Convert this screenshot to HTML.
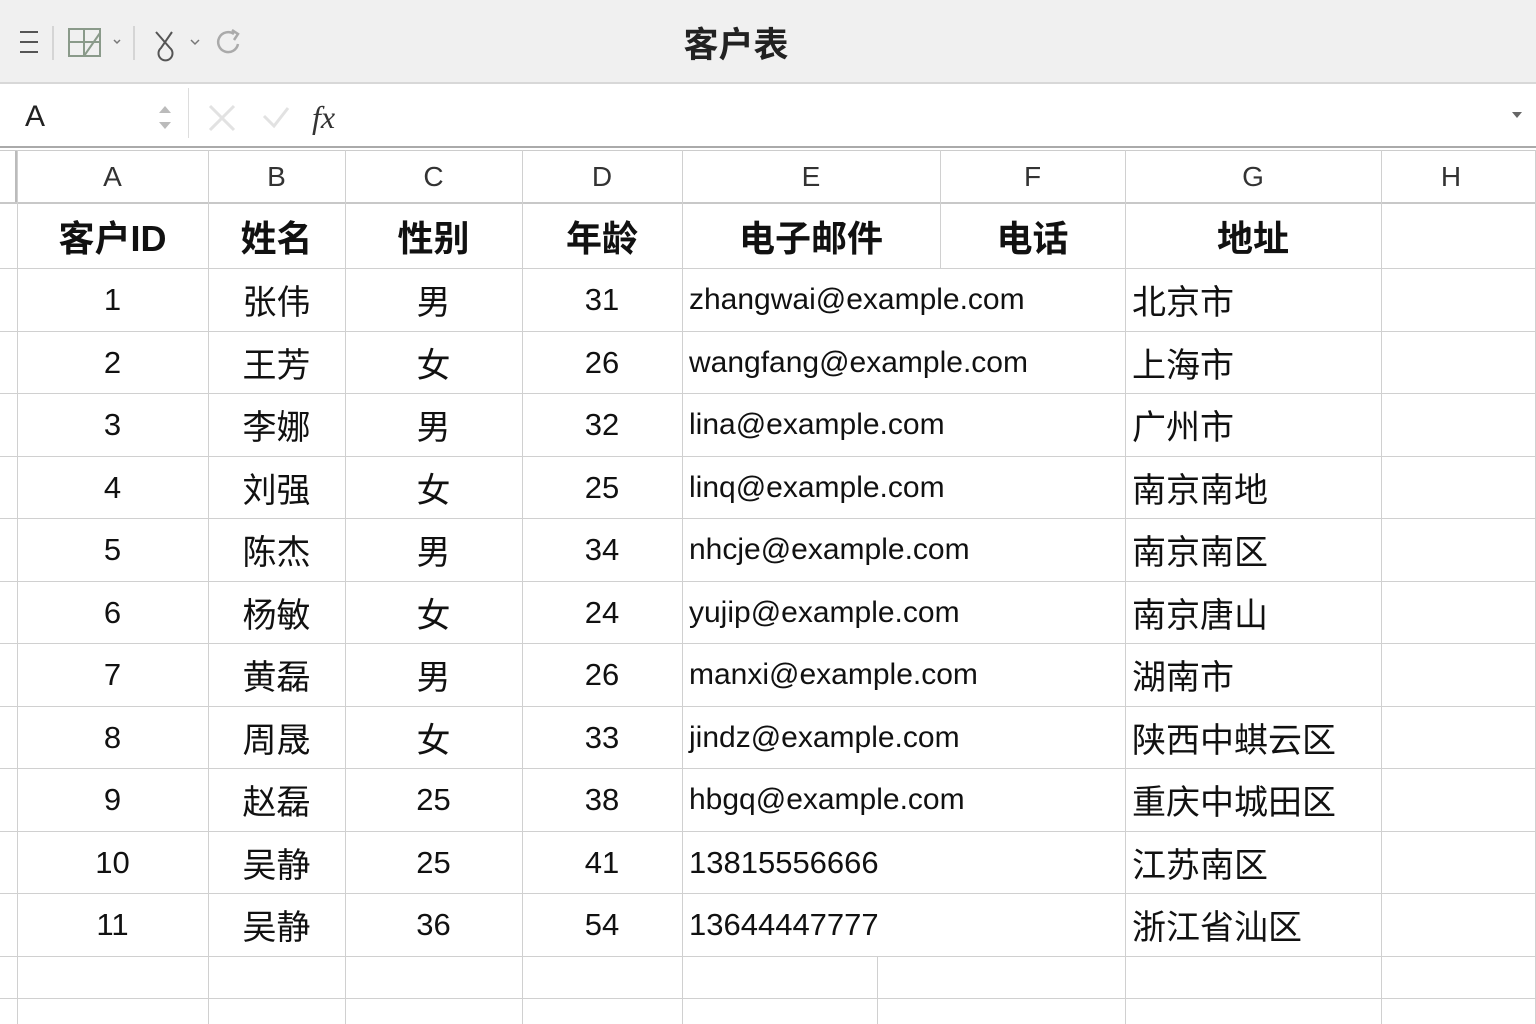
<!DOCTYPE html>
<html><head><meta charset="utf-8"><style>
*{margin:0;padding:0;box-sizing:border-box}
body{width:1536px;height:1024px;overflow:hidden;background:#fff;font-family:"Liberation Sans","Noto Sans CJK SC",sans-serif;color:#111;position:relative}
.a{position:absolute}
.h{position:absolute;height:1px;background:#d0d0d0}
.v{position:absolute;width:1px;background:#d0d0d0}
.c{position:absolute;display:flex;align-items:center;justify-content:center;white-space:nowrap}
.l{justify-content:flex-start;padding-left:7px}
.d{font-size:31px}
.k{font-size:34px}
.e{font-size:30px}
.b{font-weight:bold;font-size:36px}
.col{font-size:28px;color:#333}
</style></head><body>
<div class="a" style="left:0;top:0;width:1536px;height:84px;background:#f0f0f0;border-bottom:2px solid #d8d8d8"></div>
<svg class="a" style="left:0;top:0" width="260" height="84">
<g stroke="#555" stroke-width="2" fill="none">
<line x1="20" y1="32" x2="38" y2="32"/><line x1="20" y1="42" x2="38" y2="42"/><line x1="20" y1="52" x2="38" y2="52"/>
</g>
<line x1="53" y1="26" x2="53" y2="60" stroke="#ccc" stroke-width="1.5"/>
<g stroke="#8a9a8a" stroke-width="2" fill="none"><rect x="69" y="29" width="31" height="27"/><line x1="84" y1="29" x2="84" y2="56"/><line x1="69" y1="42" x2="100" y2="42"/><line x1="84" y1="56" x2="100" y2="33"/></g>
<path d="M114 40 l3 3 l3 -3" stroke="#777" stroke-width="1.5" fill="none"/>
<line x1="134" y1="26" x2="134" y2="60" stroke="#ccc" stroke-width="1.5"/>
<path d="M156 32 L170 48 A7 7 0 1 1 161 48 L172 32" stroke="#555" stroke-width="2" fill="none"/>
<path d="M191 40 l4 4 l4 -4" stroke="#777" stroke-width="1.5" fill="none"/>
<path d="M238 44 A10 10 0 1 1 234 34 M232 30 l6 4 l-4 6" stroke="#aaa" stroke-width="2.5" fill="none"/>
</svg>
<div class="c" style="left:636px;top:20px;width:200px;height:44px;font-size:35px;font-weight:bold;color:#222">客户表</div>
<div class="a" style="left:0;top:86px;width:1536px;height:62px;background:#fff;border-bottom:2px solid #aaa"></div>
<div class="a" style="left:25px;top:100px;font-size:30px;color:#222">A</div>
<svg class="a" style="left:150px;top:100px" width="30" height="36"><path d="M9 13 l6 -7 l6 7z M9 22 l6 7 l6 -7z" fill="#bbb"/></svg>
<div class="v" style="left:188px;top:88px;height:50px;background:#ddd"></div>
<svg class="a" style="left:200px;top:96px" width="160" height="44"><g stroke="#e2e2e2" stroke-width="3" fill="none"><path d="M10 10 L34 34 M34 10 L10 34"/><path d="M64 20 L74 30 L88 12"/></g>
<text x="112" y="32" font-family="Liberation Serif,serif" font-style="italic" font-size="32" fill="#333">fx</text></svg>
<svg class="a" style="left:1510px;top:110px" width="14" height="10"><path d="M2 2 h10 l-5 6z" fill="#666"/></svg>
<div class="a" style="left:15px;top:150px;width:3px;height:52px;background:#bbb"></div>
<div class="h" style="left:0;top:150px;width:1536px;background:#ccc"></div>
<div class="h" style="left:0;top:202px;width:1536px;height:2px;background:#c8c8c8"></div>
<div class="v" style="left:17px;top:150px;height:874px"></div>
<div class="v" style="left:208px;top:150px;height:874px"></div>
<div class="v" style="left:345px;top:150px;height:874px"></div>
<div class="v" style="left:522px;top:150px;height:874px"></div>
<div class="v" style="left:682px;top:150px;height:874px"></div>
<div class="v" style="left:940px;top:150px;height:118px"></div>
<div class="v" style="left:877px;top:956px;height:68px"></div>
<div class="v" style="left:1125px;top:150px;height:874px"></div>
<div class="v" style="left:1381px;top:150px;height:874px"></div>
<div class="v" style="left:1535px;top:150px;height:874px"></div>
<div class="h" style="left:0;top:268px;width:1536px"></div>
<div class="h" style="left:0;top:331px;width:1536px"></div>
<div class="h" style="left:0;top:393px;width:1536px"></div>
<div class="h" style="left:0;top:456px;width:1536px"></div>
<div class="h" style="left:0;top:518px;width:1536px"></div>
<div class="h" style="left:0;top:581px;width:1536px"></div>
<div class="h" style="left:0;top:643px;width:1536px"></div>
<div class="h" style="left:0;top:706px;width:1536px"></div>
<div class="h" style="left:0;top:768px;width:1536px"></div>
<div class="h" style="left:0;top:831px;width:1536px"></div>
<div class="h" style="left:0;top:893px;width:1536px"></div>
<div class="h" style="left:0;top:956px;width:1536px"></div>
<div class="h" style="left:0;top:998px;width:1536px"></div>
<div class="c col" style="left:17px;top:152px;width:191px;height:50px">A</div>
<div class="c col" style="left:208px;top:152px;width:137px;height:50px">B</div>
<div class="c col" style="left:345px;top:152px;width:177px;height:50px">C</div>
<div class="c col" style="left:522px;top:152px;width:160px;height:50px">D</div>
<div class="c col" style="left:682px;top:152px;width:258px;height:50px">E</div>
<div class="c col" style="left:940px;top:152px;width:185px;height:50px">F</div>
<div class="c col" style="left:1125px;top:152px;width:256px;height:50px">G</div>
<div class="c col" style="left:1381px;top:152px;width:140px;height:50px">H</div>
<div class="c b" style="left:17px;top:204px;width:191px;height:64px">客户ID</div>
<div class="c b" style="left:208px;top:204px;width:137px;height:64px">姓名</div>
<div class="c b" style="left:345px;top:204px;width:177px;height:64px">性别</div>
<div class="c b" style="left:522px;top:204px;width:160px;height:64px">年龄</div>
<div class="c b" style="left:682px;top:204px;width:258px;height:64px">电子邮件</div>
<div class="c b" style="left:940px;top:204px;width:185px;height:64px">电话</div>
<div class="c b" style="left:1125px;top:204px;width:256px;height:64px">地址</div>
<div class="c d" style="left:17px;top:268px;width:191px;height:63px">1</div><div class="c k" style="left:208px;top:268px;width:137px;height:63px">张伟</div><div class="c k" style="left:345px;top:268px;width:177px;height:63px">男</div><div class="c d" style="left:522px;top:268px;width:160px;height:63px">31</div><div class="c e l" style="left:682px;top:268px;width:443px;height:63px">zhangwai@example.com</div><div class="c k l" style="left:1125px;top:268px;width:256px;height:63px">北京市</div>
<div class="c d" style="left:17px;top:331px;width:191px;height:63px">2</div><div class="c k" style="left:208px;top:331px;width:137px;height:63px">王芳</div><div class="c k" style="left:345px;top:331px;width:177px;height:63px">女</div><div class="c d" style="left:522px;top:331px;width:160px;height:63px">26</div><div class="c e l" style="left:682px;top:331px;width:443px;height:63px">wangfang@example.com</div><div class="c k l" style="left:1125px;top:331px;width:256px;height:63px">上海市</div>
<div class="c d" style="left:17px;top:393px;width:191px;height:63px">3</div><div class="c k" style="left:208px;top:393px;width:137px;height:63px">李娜</div><div class="c k" style="left:345px;top:393px;width:177px;height:63px">男</div><div class="c d" style="left:522px;top:393px;width:160px;height:63px">32</div><div class="c e l" style="left:682px;top:393px;width:443px;height:63px">lina@example.com</div><div class="c k l" style="left:1125px;top:393px;width:256px;height:63px">广州市</div>
<div class="c d" style="left:17px;top:456px;width:191px;height:63px">4</div><div class="c k" style="left:208px;top:456px;width:137px;height:63px">刘强</div><div class="c k" style="left:345px;top:456px;width:177px;height:63px">女</div><div class="c d" style="left:522px;top:456px;width:160px;height:63px">25</div><div class="c e l" style="left:682px;top:456px;width:443px;height:63px">linq@example.com</div><div class="c k l" style="left:1125px;top:456px;width:256px;height:63px">南京南地</div>
<div class="c d" style="left:17px;top:518px;width:191px;height:63px">5</div><div class="c k" style="left:208px;top:518px;width:137px;height:63px">陈杰</div><div class="c k" style="left:345px;top:518px;width:177px;height:63px">男</div><div class="c d" style="left:522px;top:518px;width:160px;height:63px">34</div><div class="c e l" style="left:682px;top:518px;width:443px;height:63px">nhcje@example.com</div><div class="c k l" style="left:1125px;top:518px;width:256px;height:63px">南京南区</div>
<div class="c d" style="left:17px;top:581px;width:191px;height:63px">6</div><div class="c k" style="left:208px;top:581px;width:137px;height:63px">杨敏</div><div class="c k" style="left:345px;top:581px;width:177px;height:63px">女</div><div class="c d" style="left:522px;top:581px;width:160px;height:63px">24</div><div class="c e l" style="left:682px;top:581px;width:443px;height:63px">yujip@example.com</div><div class="c k l" style="left:1125px;top:581px;width:256px;height:63px">南京唐山</div>
<div class="c d" style="left:17px;top:643px;width:191px;height:63px">7</div><div class="c k" style="left:208px;top:643px;width:137px;height:63px">黄磊</div><div class="c k" style="left:345px;top:643px;width:177px;height:63px">男</div><div class="c d" style="left:522px;top:643px;width:160px;height:63px">26</div><div class="c e l" style="left:682px;top:643px;width:443px;height:63px">manxi@example.com</div><div class="c k l" style="left:1125px;top:643px;width:256px;height:63px">湖南市</div>
<div class="c d" style="left:17px;top:706px;width:191px;height:63px">8</div><div class="c k" style="left:208px;top:706px;width:137px;height:63px">周晟</div><div class="c k" style="left:345px;top:706px;width:177px;height:63px">女</div><div class="c d" style="left:522px;top:706px;width:160px;height:63px">33</div><div class="c e l" style="left:682px;top:706px;width:443px;height:63px">jindz@example.com</div><div class="c k l" style="left:1125px;top:706px;width:256px;height:63px">陕西中蜞云区</div>
<div class="c d" style="left:17px;top:768px;width:191px;height:63px">9</div><div class="c k" style="left:208px;top:768px;width:137px;height:63px">赵磊</div><div class="c d" style="left:345px;top:768px;width:177px;height:63px">25</div><div class="c d" style="left:522px;top:768px;width:160px;height:63px">38</div><div class="c e l" style="left:682px;top:768px;width:443px;height:63px">hbgq@example.com</div><div class="c k l" style="left:1125px;top:768px;width:256px;height:63px">重庆中城田区</div>
<div class="c d" style="left:17px;top:831px;width:191px;height:63px">10</div><div class="c k" style="left:208px;top:831px;width:137px;height:63px">吴静</div><div class="c d" style="left:345px;top:831px;width:177px;height:63px">25</div><div class="c d" style="left:522px;top:831px;width:160px;height:63px">41</div><div class="c d l" style="left:682px;top:831px;width:443px;height:63px">13815556666</div><div class="c k l" style="left:1125px;top:831px;width:256px;height:63px">江苏南区</div>
<div class="c d" style="left:17px;top:893px;width:191px;height:63px">11</div><div class="c k" style="left:208px;top:893px;width:137px;height:63px">吴静</div><div class="c d" style="left:345px;top:893px;width:177px;height:63px">36</div><div class="c d" style="left:522px;top:893px;width:160px;height:63px">54</div><div class="c d l" style="left:682px;top:893px;width:443px;height:63px">13644447777</div><div class="c k l" style="left:1125px;top:893px;width:256px;height:63px">浙江省汕区</div>
</body></html>
